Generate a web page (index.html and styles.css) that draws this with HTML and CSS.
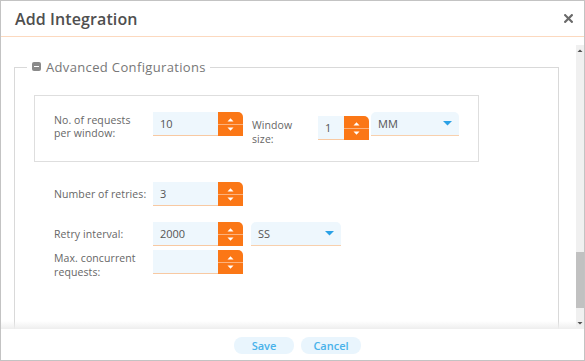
FILE: index.html
```html
<!DOCTYPE html>
<html lang="en">
<head>
<meta charset="utf-8">
<title>Add Integration</title>
<link rel="stylesheet" href="styles.css">
</head>
<body>
<div class="dialog">
  <header class="dlg-header">
    <h1 class="dlg-title">Add Integration</h1>
    <button class="dlg-close" aria-label="Close">
      <svg width="9" height="9" viewBox="0 0 9 9"><path d="M1.2 1.2 L7.8 7.8 M7.8 1.2 L1.2 7.8" stroke="#6a6a6a" stroke-width="2.2" stroke-linecap="square"/></svg>
    </button>
  </header>

  <div class="dlg-body">
    <div class="scroll-view">
      <div class="scroll-content">
        <fieldset class="adv">
          <legend class="adv-legend"><span class="collapse-icon"></span>Advanced Configurations</legend>

          <div class="rate-box">
            <label class="fld-label lbl-req">No. of requests<br>per window:</label>
            <div class="num num-req">
              <span class="num-input w65">10</span>
              <span class="spin"><svg width="25" height="24" viewBox="0 0 25 24"><line x1="0" y1="12.5" x2="25" y2="12.5" stroke="#fdb27c" stroke-width="1"/><polygon points="9.5,9.5 15.5,9.5 12.5,6.3" fill="#fff"/><polygon points="9.5,15.5 15.5,15.5 12.5,18.7" fill="#fff"/></svg></span>
            </div>
            <label class="fld-label lbl-win">Window<br>size:</label>
            <div class="num num-win">
              <span class="num-input w26">1</span>
              <span class="spin"><svg width="25" height="24" viewBox="0 0 25 24"><line x1="0" y1="12.5" x2="25" y2="12.5" stroke="#fdb27c" stroke-width="1"/><polygon points="9.5,9.5 15.5,9.5 12.5,6.3" fill="#fff"/><polygon points="9.5,15.5 15.5,15.5 12.5,18.7" fill="#fff"/></svg></span>
            </div>
            <div class="select sel-mm">
              <span class="sel-text">MM</span>
              <svg class="caret" width="9" height="5" viewBox="0 0 9 5"><polygon points="0,0 9,0 4.5,4.5" fill="#2aa1e6"/></svg>
            </div>
          </div>

          <div class="form-row row-retries">
            <label class="fld-label">Number of retries:</label>
            <div class="num">
              <span class="num-input w65">3</span>
              <span class="spin"><svg width="25" height="24" viewBox="0 0 25 24"><line x1="0" y1="12.5" x2="25" y2="12.5" stroke="#fdb27c" stroke-width="1"/><polygon points="9.5,9.5 15.5,9.5 12.5,6.3" fill="#fff"/><polygon points="9.5,15.5 15.5,15.5 12.5,18.7" fill="#fff"/></svg></span>
            </div>
          </div>

          <div class="form-row row-interval">
            <label class="fld-label">Retry interval:</label>
            <div class="num">
              <span class="num-input w65">2000</span>
              <span class="spin"><svg width="25" height="24" viewBox="0 0 25 24"><line x1="0" y1="12.5" x2="25" y2="12.5" stroke="#fdb27c" stroke-width="1"/><polygon points="9.5,9.5 15.5,9.5 12.5,6.3" fill="#fff"/><polygon points="9.5,15.5 15.5,15.5 12.5,18.7" fill="#fff"/></svg></span>
            </div>
            <div class="select sel-ss">
              <span class="sel-text">SS</span>
              <svg class="caret" width="9" height="5" viewBox="0 0 9 5"><polygon points="0,0 9,0 4.5,4.5" fill="#2aa1e6"/></svg>
            </div>
          </div>

          <div class="form-row row-max">
            <label class="fld-label lbl-max">Max. concurrent<br>requests:</label>
            <div class="num">
              <span class="num-input w65"></span>
              <span class="spin"><svg width="25" height="24" viewBox="0 0 25 24"><line x1="0" y1="12.5" x2="25" y2="12.5" stroke="#fdb27c" stroke-width="1"/><polygon points="9.5,9.5 15.5,9.5 12.5,6.3" fill="#fff"/><polygon points="9.5,15.5 15.5,15.5 12.5,18.7" fill="#fff"/></svg></span>
            </div>
          </div>
        </fieldset>
      </div>
      <div class="scroll-shade"></div>
    </div>
    <div class="scrollbar">
      <div class="sb-btn"><svg width="8" height="11" viewBox="0 0 8 11"><polygon points="1.5,7 6.5,7 4,4.5" fill="#505050"/></svg></div>
      <div class="sb-track"><div class="sb-thumb"></div></div>
      <div class="sb-btn"><svg width="8" height="11" viewBox="0 0 8 11"><polygon points="1.5,4 6.5,4 4,6.5" fill="#505050"/></svg></div>
    </div>
  </div>

  <footer class="dlg-footer">
    <button class="btn">Save</button>
    <button class="btn">Cancel</button>
  </footer>
</div>
</body>
</html>
```

FILE: styles.css
```css
* { box-sizing: border-box; }

html, body {
  margin: 0;
  padding: 0;
  background: #ffffff;
}

body {
  font-family: "Open Sans", "Noto Sans", sans-serif;
  color: #555;
}

.dialog {
  width: 585px;
  height: 361px;
  border: 1px solid #c3c3c3;
  display: flex;
  flex-direction: column;
  background: #fff;
}

/* header */
.dlg-header {
  height: 36px;
  flex: 0 0 36px;
  border-bottom: 1px solid #fcd9bf;
  display: flex;
  align-items: center;
  justify-content: space-between;
  padding: 0 9px 0 14px;
}

.dlg-title {
  margin: 0;
  font-size: 16px;
  font-weight: 600;
  color: #4f4f4f;
  letter-spacing: 0.1px;
  line-height: 20px;
}

.dlg-close {
  width: 14px;
  height: 14px;
  padding: 0;
  border: 0;
  background: transparent;
  display: flex;
  align-items: center;
  justify-content: center;
}

/* body */
.dlg-body {
  flex: 1 1 auto;
  display: flex;
  padding-top: 8px;
  min-height: 0;
}

.scroll-view {
  flex: 1 1 auto;
  overflow: hidden;
  position: relative;
}

.scroll-content {
  padding: 14px 17px 0 13px;
}

.scroll-shade {
  position: absolute;
  left: 0;
  right: 0;
  bottom: 0;
  height: 8px;
  background: linear-gradient(to bottom, rgba(242, 242, 242, 0), #eeeeee);
}

.scrollbar {
  width: 8px;
  flex: 0 0 8px;
  display: flex;
  flex-direction: column;
  background: #f0f0f0;
}

.sb-btn {
  height: 11px;
  flex: 0 0 11px;
  display: flex;
}

.sb-track {
  flex: 1 1 auto;
}

.sb-thumb {
  margin-top: 196px;
  height: 56px;
  background: #c1c1c1;
}

/* fieldset */
.adv {
  margin: 0;
  padding: 0 12px 0 12px;
  border: 1px solid #d9d9d9;
  min-height: 320px;
}

.adv-legend {
  padding: 0 4px 0 5px;
  font-size: 13px;
  line-height: 16px;
  color: #777;
  letter-spacing: 0.35px;
  display: flex;
  align-items: center;
}

.collapse-icon {
  width: 9px;
  height: 9px;
  border-radius: 2px;
  background: #8a8a8a;
  margin-right: 5px;
  display: inline-flex;
  align-items: center;
  justify-content: center;
  margin-top: -1px;
}

.collapse-icon::before {
  content: "";
  width: 5px;
  height: 1.5px;
  background: #fff;
}

/* rate box */
.rate-box {
  margin: 20px 0 0 7px;
  width: 445px;
  height: 67px;
  border: 1px solid #dedede;
  padding: 16px 0 0 19px;
  display: flex;
  align-items: flex-start;
}

.fld-label {
  font-size: 10.5px;
  color: #666;
  width: 99px;
  flex: 0 0 99px;
  line-height: 14px;
  letter-spacing: 0.1px;
}

.lbl-req {
  line-height: 13px;
  margin-top: 2px;
}

.lbl-win {
  width: 66px;
  flex: 0 0 66px;
  margin-left: 9px;
  margin-top: 6px;
}

.num {
  display: flex;
  height: 24px;
}

.num-win {
  margin-top: 4px;
}

.num-input {
  height: 24px;
  background: #eef7fd;
  border-bottom: 1px solid #f8c9a2;
  font-size: 11px;
  color: #555;
  padding-left: 7px;
  line-height: 23px;
}

.w65 { width: 65px; }
.w26 { width: 26px; }

.spin {
  width: 25px;
  height: 24px;
  background: #fb7716;
  border-radius: 0 5px 0 0;
  display: flex;
  overflow: hidden;
}

.select {
  height: 24px;
  background: #eef7fd;
  border-radius: 5px 5px 0 0;
  border-bottom: 1px solid #f8d0ad;
  display: flex;
  align-items: center;
  justify-content: space-between;
  padding: 0 7px 0 7px;
  font-size: 11px;
  color: #555;
}

.sel-mm {
  width: 88px;
  margin-left: 2px;
}

.sel-ss {
  width: 90px;
  margin-left: 8px;
}

/* rows */
.form-row {
  display: flex;
  align-items: center;
  padding-left: 27px;
}

.row-retries { margin-top: 20px; }
.row-interval { margin-top: 16px; }
.row-max {
  margin-top: 4px;
  align-items: flex-start;
}

.lbl-max {
  margin-top: 1px;
}

/* footer */
.dlg-footer {
  height: 31px;
  flex: 0 0 31px;
  display: flex;
  justify-content: center;
  align-items: flex-start;
  gap: 7px;
  padding: 8px 0 0 10px;
}

.btn {
  width: 60px;
  height: 17px;
  border: 0;
  border-radius: 8px;
  background: #e9f5fd;
  color: #48b2ea;
  font-family: "Open Sans", "Noto Sans", sans-serif;
  font-size: 11px;
  font-weight: 600;
  line-height: 17px;
  padding: 0;
}
```
